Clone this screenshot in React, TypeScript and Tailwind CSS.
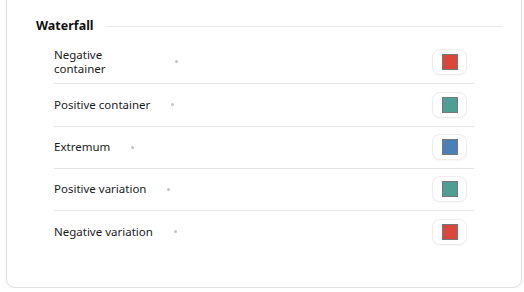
import React from "react";

const rows = [
  { label: "Negative container", color: "#d9473b" },
  { label: "Positive container", color: "#4f9e94" },
  { label: "Extremum", color: "#4a80b6" },
  { label: "Positive variation", color: "#4f9e94" },
  { label: "Negative variation", color: "#d9473b" },
];

function ColorButton({ color }: { color: string }) {
  return (
    <button className="flex h-[26px] w-[35px] items-center justify-center rounded-[8px] border border-[#ececec] bg-white shadow-[0_1px_2px_rgba(0,0,0,0.04)]">
      <span
        className="block h-[16px] w-[16px] border border-[#777777]"
        style={{ background: color }}
      />
    </button>
  );
}

export default function App() {
  return (
    <div
      className="min-h-[292px] w-[524px] bg-white"
      style={{ fontFamily: '"Noto Sans", "Open Sans", sans-serif' }}
    >
      <div className="ml-[6px] mr-[2px] -mt-[10px] h-[298px] rounded-[9px] border border-[#e2e2e2] bg-white pl-[29px] pr-[18px] pt-[27px] shadow-[0_1px_3px_rgba(0,0,0,0.06)]">
        {/* Section header */}
        <div className="flex h-[16px] items-center gap-[12px]">
          <h3 className="text-[12.5px] font-bold leading-[16px] text-[#111]">
            Waterfall
          </h3>
          <div className="h-px flex-1 bg-[#e8e8e8]" />
        </div>

        <div className="mt-[6px] ml-[18px] mr-[29px]">
          {rows.map((row, i) => (
            <div
              key={row.label}
              className={
                "flex items-center py-[7.65px] " +
                (i < rows.length - 1 ? "border-b border-[#e6e6e6]" : "")
              }
            >
              <div className="flex flex-1 items-center">
                <span className="max-w-[100px] text-[11.5px] leading-[14px] text-[#1a1a1a]">
                  {row.label}
                </span>
                <span className="ml-[21px] h-[3px] w-[3px] rounded-full bg-[#c2c2c2]" />
              </div>
              <div className="mr-[7px]">
                <ColorButton color={row.color} />
              </div>
            </div>
          ))}
        </div>
      </div>
    </div>
  );
}
